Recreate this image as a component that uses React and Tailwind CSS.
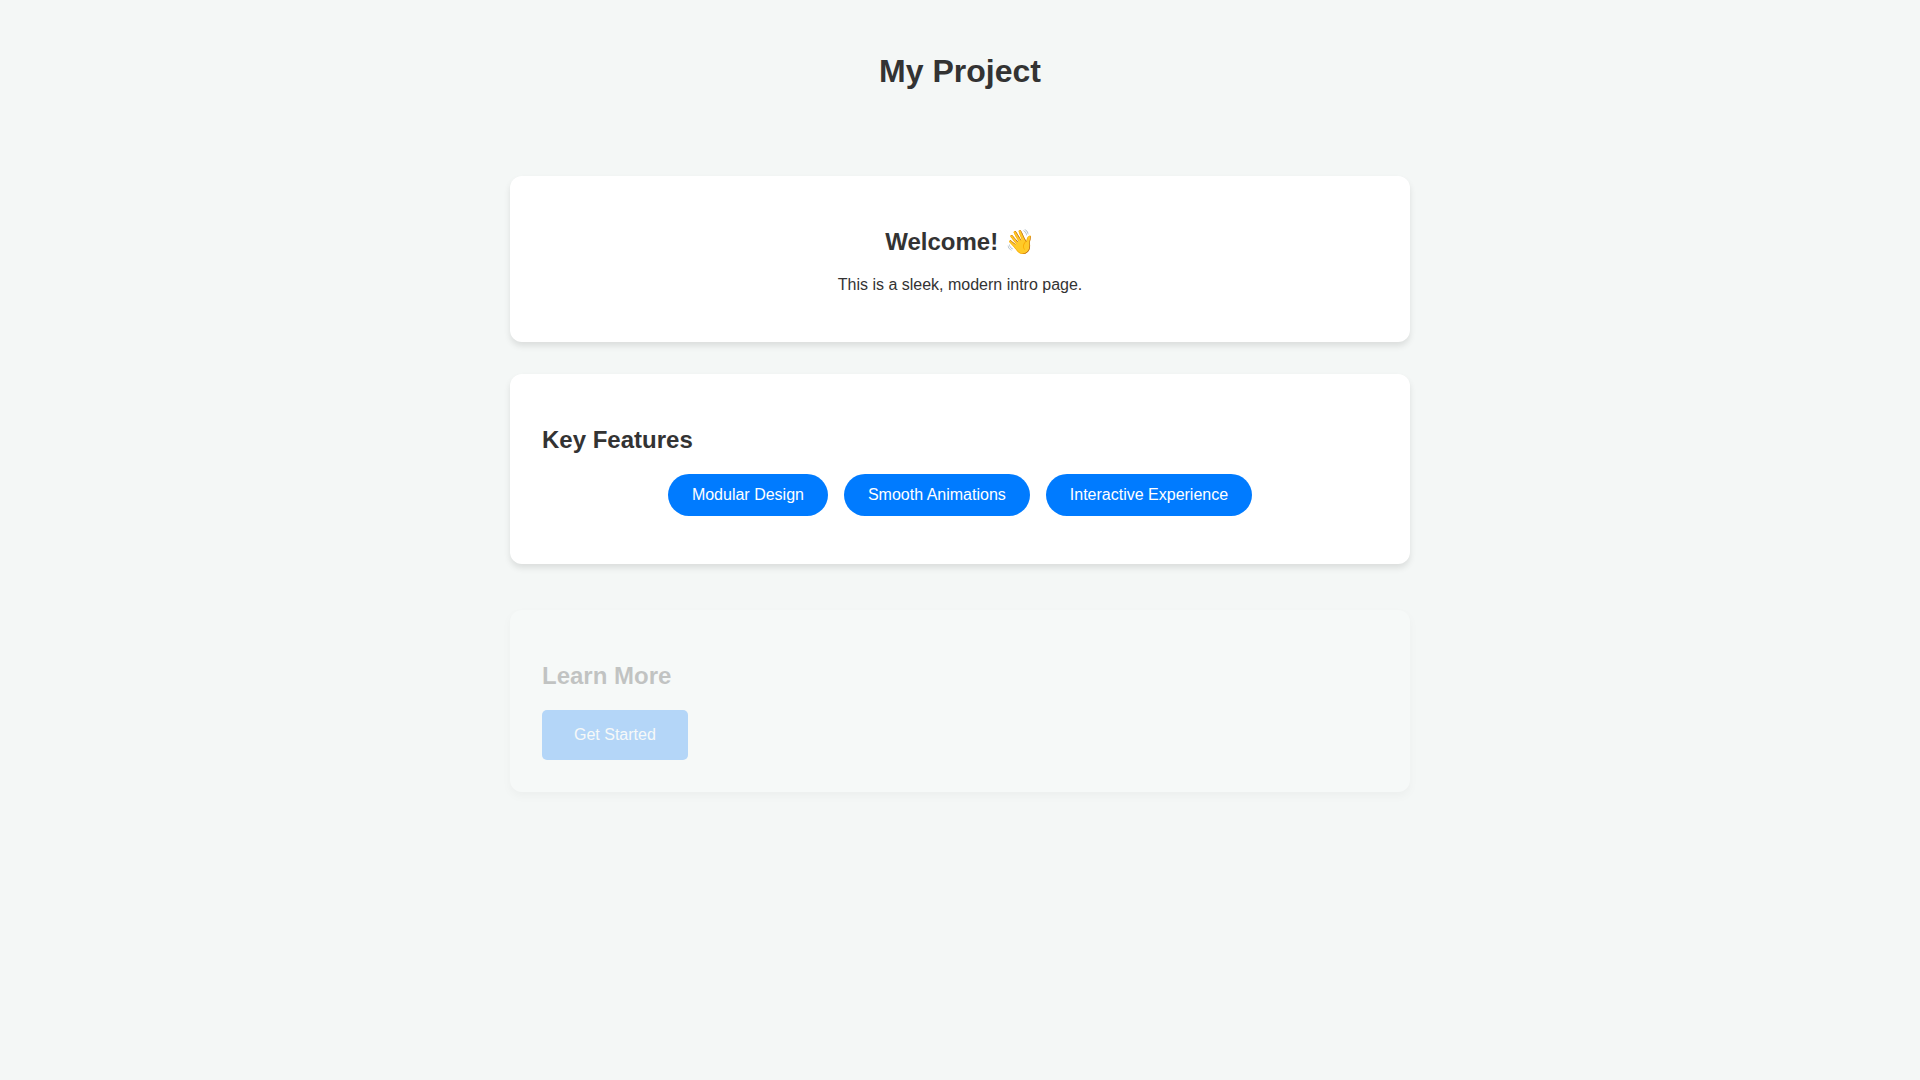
const features = ["Modular Design", "Smooth Animations", "Interactive Experience"];

function Card({ className = "", children }) {
  return (
    <section className={`w-full rounded-xl bg-white p-8 shadow-[0_4px_6px_rgba(0,0,0,0.1)] ${className}`}>
      {children}
    </section>
  );
}

export default function App() {
  return (
    <div className="min-h-screen bg-[#f4f7f6] font-['Liberation_Sans',Arial,sans-serif] text-base leading-[18px] text-[#333]">
      <header className="px-5 pt-[53px] pb-[87px] text-center">
        <h1 className="text-[32px] leading-9 font-bold">My Project</h1>
      </header>

      <main className="mx-auto max-w-[900px]">
        <Card className="text-center">
          <h2 className="my-5 text-2xl leading-7 font-bold">Welcome! 👋</h2>
          <p className="mb-4">This is a sleek, modern intro page.</p>
        </Card>

        <Card className="mt-8">
          <h2 className="my-5 text-2xl leading-7 font-bold">Key Features</h2>
          <ul className="mb-4 flex flex-wrap justify-center gap-4">
            {features.map((feature) => (
              <li key={feature} className="rounded-full bg-[#007bff] px-6 py-3 text-white">
                {feature}
              </li>
            ))}
          </ul>
        </Card>

        {/* Partway through its fade-in */}
        <Card className="mt-[46px] opacity-26">
          <h2 className="my-5 text-2xl leading-7 font-bold">Learn More</h2>
          <button type="button" className="rounded-[5px] bg-[#007bff] px-8 py-4 text-white">
            Get Started
          </button>
        </Card>
      </main>
    </div>
  );
}
